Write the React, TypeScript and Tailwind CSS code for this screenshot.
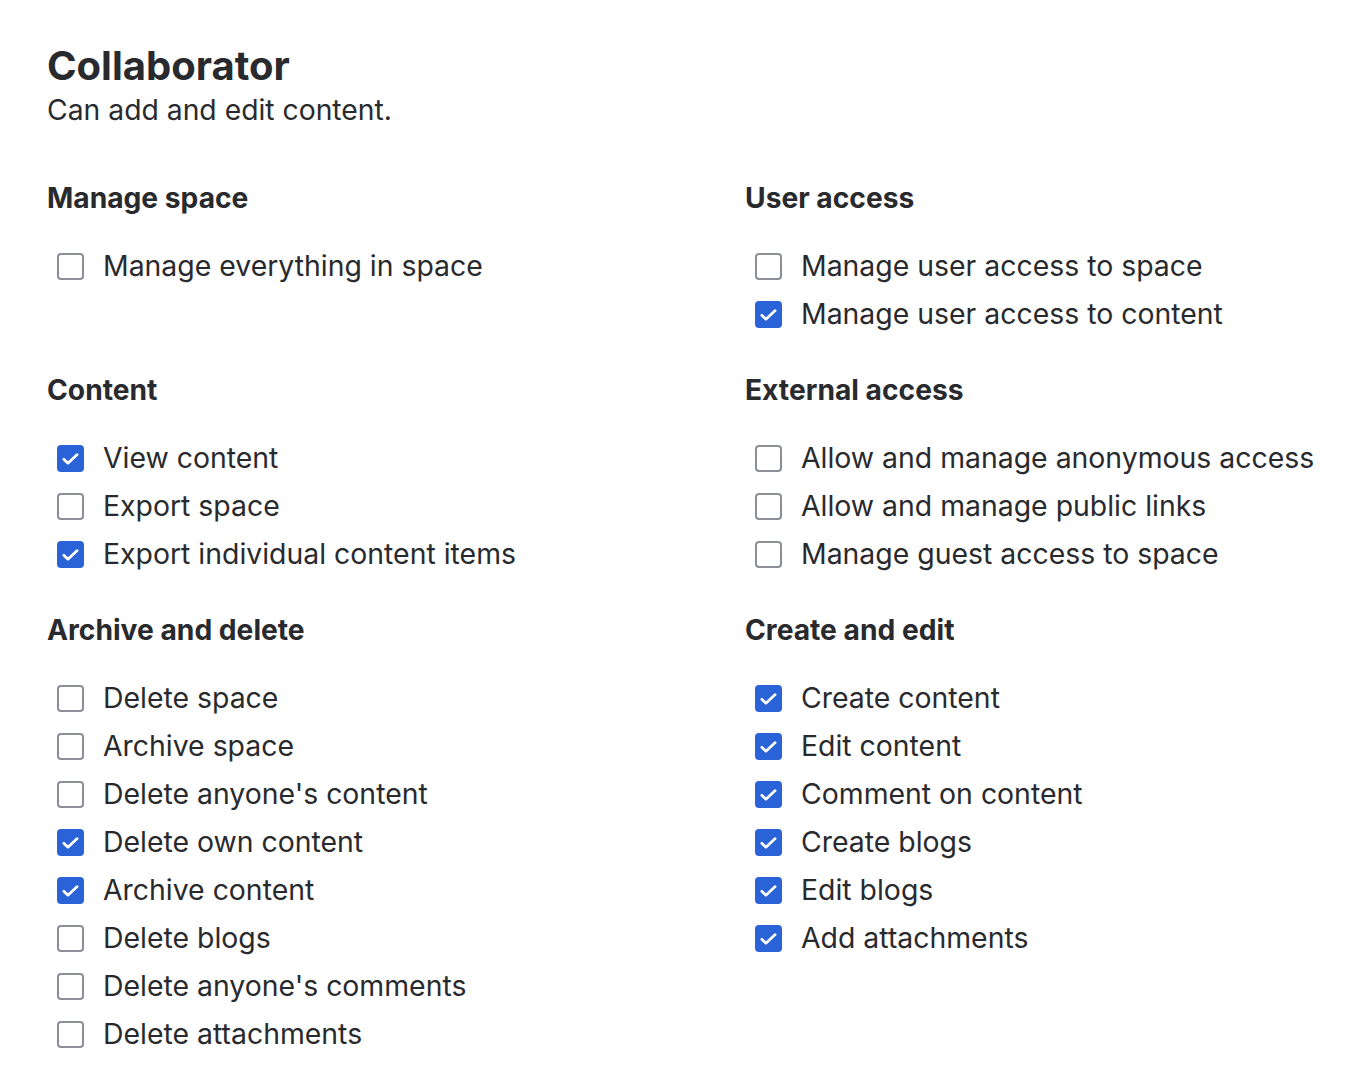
import React from "react";

type Item = { label: string; checked: boolean };
type Section = { title: string; items: Item[] };

const left: Section[] = [
  { title: "Manage space", items: [{ label: "Manage everything in space", checked: false }] },
  {
    title: "Content",
    items: [
      { label: "View content", checked: true },
      { label: "Export space", checked: false },
      { label: "Export individual content items", checked: true },
    ],
  },
  {
    title: "Archive and delete",
    items: [
      { label: "Delete space", checked: false },
      { label: "Archive space", checked: false },
      { label: "Delete anyone's content", checked: false },
      { label: "Delete own content", checked: true },
      { label: "Archive content", checked: true },
      { label: "Delete blogs", checked: false },
      { label: "Delete anyone's comments", checked: false },
      { label: "Delete attachments", checked: false },
    ],
  },
];

const right: Section[] = [
  {
    title: "User access",
    items: [
      { label: "Manage user access to space", checked: false },
      { label: "Manage user access to content", checked: true },
    ],
  },
  {
    title: "External access",
    items: [
      { label: "Allow and manage anonymous access", checked: false },
      { label: "Allow and manage public links", checked: false },
      { label: "Manage guest access to space", checked: false },
    ],
  },
  {
    title: "Create and edit",
    items: [
      { label: "Create content", checked: true },
      { label: "Edit content", checked: true },
      { label: "Comment on content", checked: true },
      { label: "Create blogs", checked: true },
      { label: "Edit blogs", checked: true },
      { label: "Add attachments", checked: true },
    ],
  },
];

function Box({ checked }: { checked: boolean }) {
  if (checked) {
    return (
      <span className="flex h-[27px] w-[27px] shrink-0 items-center justify-center rounded-[4px] bg-[#2a63d8]">
        <svg width="27" height="27" viewBox="0 0 27 27" fill="none">
          <path d="M6.8 14.2l4.1 4L20.2 9.6" stroke="white" strokeWidth="2.7" strokeLinecap="round" strokeLinejoin="round" />
        </svg>
      </span>
    );
  }
  return <span className="block h-[27px] w-[27px] shrink-0 rounded-[4px] border-2 border-[#8c8f97] bg-white" />;
}

function Row({ item }: { item: Item }) {
  return (
    <div className="flex h-[48px] items-center pl-[10px]">
      <Box checked={item.checked} />
      <span className="ml-[19px] text-[28.4px] leading-[48px] text-[#292a2e]">{item.label}</span>
    </div>
  );
}

function SectionBlock({ section }: { section: Section }) {
  return (
    <div className="flex flex-col">
      <h3 className="h-[32px] text-[28.2px] font-bold leading-[32px] text-[#292a2e]">{section.title}</h3>
      <div className="mt-[28px] flex flex-col">
        {section.items.map((it) => (
          <Row key={it.label} item={it} />
        ))}
      </div>
    </div>
  );
}

export default function App() {
  const rows = left.map((l, i) => [l, right[i]] as const);
  return (
    <div
      className="min-h-[1090px] w-[1352px] bg-white pl-[47px] pt-[42px]"
      style={{ fontFamily: "Inter, 'Noto Sans', sans-serif" }}
    >
      <h1 className="text-[40px] font-bold leading-[48px] text-[#292a2e]">Collaborator</h1>
      <p className="text-[28.3px] leading-[40px] text-[#292a2e]">Can add and edit content.</p>
      <div className="mt-[52px] grid grid-cols-[698px_1fr] gap-y-[36px]">
        {rows.map(([l, r]) => (
          <React.Fragment key={l.title}>
            <SectionBlock section={l} />
            <SectionBlock section={r} />
          </React.Fragment>
        ))}
      </div>
    </div>
  );
}
